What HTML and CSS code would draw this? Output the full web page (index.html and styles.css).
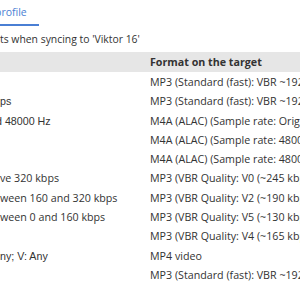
FILE: index.html
```html
<!DOCTYPE html>
<html>
<head>
<meta charset="utf-8">
<link rel="stylesheet" href="styles.css">
</head>
<body>
<div class="tabs"><a class="tab active cut-p">profile</a></div>
<p class="title">ts when syncing to 'Viktor 16'</p>
<table class="formats">
  <thead>
    <tr><th class="src"></th><th class="dst">Format on the target</th></tr>
  </thead>
  <tbody>
    <tr><td class="src"></td><td class="dst">MP3 (Standard (fast): VBR ~192 kbps)</td></tr>
    <tr><td class="src alt">ps</td><td class="dst">MP3 (Standard (fast): VBR ~192 kbps)</td></tr>
    <tr><td class="src alt cut-d">d 48000 Hz</td><td class="dst">M4A (ALAC) (Sample rate: Original)</td></tr>
    <tr><td class="src"></td><td class="dst">M4A (ALAC) (Sample rate: 48000 Hz)</td></tr>
    <tr><td class="src"></td><td class="dst">M4A (ALAC) (Sample rate: 48000 Hz)</td></tr>
    <tr><td class="src">ve 320 kbps</td><td class="dst">MP3 (VBR Quality: V0 (~245 kbps))</td></tr>
    <tr><td class="src">ween 160 and 320 kbps</td><td class="dst">MP3 (VBR Quality: V2 (~190 kbps))</td></tr>
    <tr><td class="src">ween 0 and 160 kbps</td><td class="dst">MP3 (VBR Quality: V5 (~130 kbps))</td></tr>
    <tr><td class="src"></td><td class="dst">MP3 (VBR Quality: V4 (~165 kbps))</td></tr>
    <tr><td class="src alt">ny; V: Any</td><td class="dst">MP4 video</td></tr>
    <tr><td class="src"></td><td class="dst">MP3 (Standard (fast): VBR ~192 kbps)</td></tr>
  </tbody>
</table>
</body>
</html>
```
FILE: styles.css
```css
html, body {
  margin: 0;
  padding: 0;
  background: #fff;
  overflow: hidden;
}
body {
  width: 300px;
  font-family: "Open Sans", sans-serif;
  font-size: 10.5px;
  color: #333;
}
.tabs {
  display: flex;
  height: 26px;
}
.tab {
  display: block;
  width: 39px;
  height: 24px;
  line-height: 24px;
  color: #4a7fd4;
  border-bottom: 2px solid #4a7fd4;
  white-space: nowrap;
  overflow: hidden;
}
.cut-p {
  text-indent: -5px;
}
.title {
  margin: 0;
  height: 26px;
  line-height: 26px;
  font-size: 10.4px;
  white-space: nowrap;
}
.formats {
  margin: 0;
  border-collapse: collapse;
  width: 300px;
  table-layout: fixed;
  white-space: nowrap;
  font-size: 10.7px;
}
.formats th, .formats td {
  padding: 1px 0 0;
  overflow: hidden;
  text-align: left;
  line-height: 18.3px;
  height: 18.3px;
}
.formats thead tr {
  background: #e6e6e6;
}
.formats th {
  padding: 0;
  height: 20px;
  line-height: 20px;
  font-weight: bold;
}
.src {
  width: 150px;
}
.dst {
  width: 150px;
}
.alt {
  font-family: "Liberation Sans", Arial, sans-serif;
}
.cut-d {
  text-indent: -4px;
}
```
